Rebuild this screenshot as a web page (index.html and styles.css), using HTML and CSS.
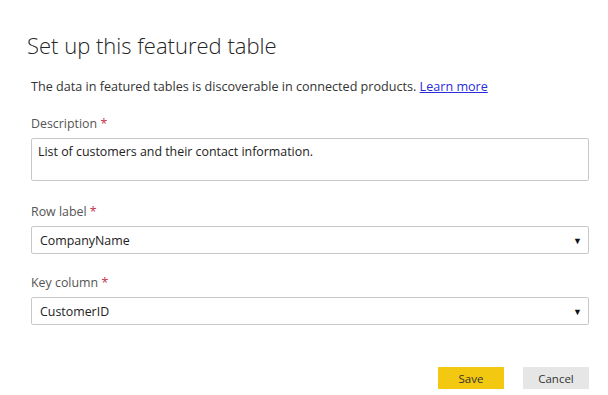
FILE: index.html
```html
<!DOCTYPE html>
<html lang="en">
<head>
    <meta charset="UTF-8">
    <title>Set up this featured table</title>
    <link rel="stylesheet" href="styles.css">
</head>
<body>
    <div class="dialog">
        <h1>Set up this featured table</h1>
        <p class="intro">The data in featured tables is discoverable in connected products. <a href="#">Learn more</a></p>

        <label class="field-label">Description <span class="req">*</span></label>
        <div class="textarea">List of customers and their contact information.</div>

        <label class="field-label">Row label <span class="req">*</span></label>
        <div class="select">
            <span>CompanyName</span>
            <span class="arrow">&#9660;</span>
        </div>

        <label class="field-label">Key column <span class="req">*</span></label>
        <div class="select">
            <span>CustomerID</span>
            <span class="arrow">&#9660;</span>
        </div>

        <div class="actions">
            <button class="save">Save</button>
            <button class="cancel">Cancel</button>
        </div>
    </div>
</body>
</html>
```

FILE: styles.css
```css
body {
    margin: 0;
    background: #fff;
    font-family: 'Open Sans', 'Noto Sans', sans-serif;
    color: #333;
}
.dialog {
    padding: 30px 19px 0 31px;
}
h1 {
    font-weight: 300;
    font-size: 22px;
    color: #252525;
    margin: 0 0 0 -4px;
    line-height: 30px;
}
.intro {
    font-size: 12.6px;
    margin: 19px 0 0;
    line-height: 16px;
}
.intro a {
    color: #2b2bd9;
}
.field-label {
    display: block;
    font-size: 12.4px;
    color: #555;
    line-height: 16px;
    margin-top: 21px;
}
.textarea + .field-label {
    margin-top: 23px;
}
.req {
    color: #c4314b;
}
.textarea {
    margin-top: 6px;
    height: 43px;
    border: 1px solid #c8c8c8;
    border-radius: 2px;
    padding: 4px 6px;
    box-sizing: border-box;
    font-size: 12.4px;
    color: #222;
}
.select {
    margin-top: 6px;
    height: 28px;
    border: 1px solid #c8c8c8;
    border-radius: 2px;
    box-sizing: border-box;
    display: flex;
    align-items: center;
    justify-content: space-between;
    padding: 0 6px 0 8px;
    font-size: 12.4px;
    color: #222;
}
.arrow {
    font-size: 9px;
    color: #111;
}
.actions {
    display: flex;
    justify-content: flex-end;
    gap: 19px;
    margin-top: 42px;
}
.actions button {
    width: 66px;
    height: 22px;
    border: none;
    font-family: inherit;
    font-size: 11.5px;
    color: #333;
    padding: 0;
}
.save {
    background: #f2c811;
}
.cancel {
    background: #e6e6e6;
}
```
